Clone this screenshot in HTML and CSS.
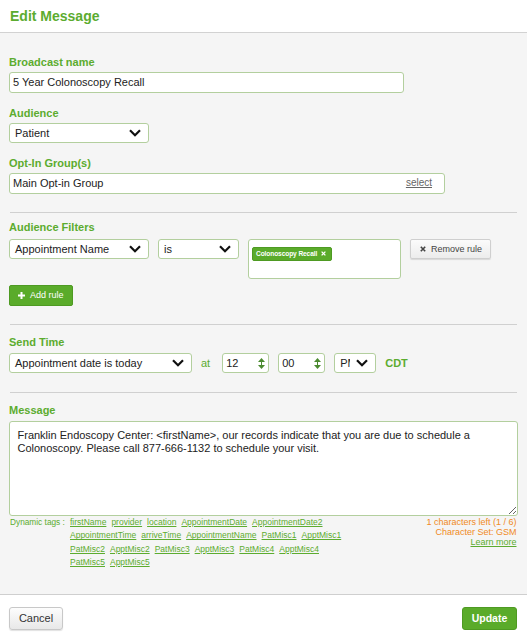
FILE: index.html
```html
<!DOCTYPE html>
<html>
<head>
<meta charset="utf-8">
<link rel="stylesheet" href="styles.css">
</head>
<body>
<div class="header">Edit Message</div>
<div class="main">
  <div class="label">Broadcast name</div>
  <div class="input w-broadcast"><span>5 Year Colonoscopy Recall</span></div>

  <div class="label gap-top">Audience</div>
  <div class="select w-aud"><span class="sel-text">Patient</span><svg class="chev" width="12" height="8" viewBox="0 0 12 8"><path d="M1 1.3 L6 6.3 L11 1.3" fill="none" stroke="#111" stroke-width="2.2"/></svg></div>

  <div class="label gap-top">Opt-In Group(s)</div>
  <div class="input w-opt"><span>Main Opt-in Group</span><span class="select-link">select</span></div>

  <div class="divider d-first"></div>

  <div class="label filters-label">Audience Filters</div>
  <div class="filter-row">
    <div class="select w-f1"><span class="sel-text">Appointment Name</span><svg class="chev" width="12" height="8" viewBox="0 0 12 8"><path d="M1 1.3 L6 6.3 L11 1.3" fill="none" stroke="#111" stroke-width="2.2"/></svg></div>
    <div class="select w-f2"><span class="sel-text">is</span><svg class="chev" width="12" height="8" viewBox="0 0 12 8"><path d="M1 1.3 L6 6.3 L11 1.3" fill="none" stroke="#111" stroke-width="2.2"/></svg></div>
    <div class="tagbox">
      <span class="tag">Colonoscopy Recall<svg class="tag-x" width="5" height="5" viewBox="0 0 5 5"><path d="M0.6 0.6 L4.4 4.4 M4.4 0.6 L0.6 4.4" stroke="#fff" stroke-width="1.3"/></svg></span>
    </div>
    <div class="btn-remove"><svg class="rm-x" width="6" height="6" viewBox="0 0 6 6"><path d="M0.8 0.8 L5.2 5.2 M5.2 0.8 L0.8 5.2" stroke="#444" stroke-width="1.6"/></svg>Remove rule</div>
  </div>
  <div class="btn-add"><svg class="plus" width="7" height="7" viewBox="0 0 7 7"><path d="M2.5 0 H4.5 V2.5 H7 V4.5 H4.5 V7 H2.5 V4.5 H0 V2.5 H2.5 Z" fill="#fff"/></svg>Add rule</div>

  <div class="divider d-mid"></div>

  <div class="label section-label">Send Time</div>
  <div class="send-row">
    <div class="select w-send"><span class="sel-text">Appointment date is today</span><svg class="chev" width="12" height="8" viewBox="0 0 12 8"><path d="M1 1.3 L6 6.3 L11 1.3" fill="none" stroke="#111" stroke-width="2.2"/></svg></div>
    <span class="at">at</span>
    <div class="num"><span>12</span><svg class="spin" width="7" height="11" viewBox="0 0 7 11"><path d="M3.5 0 L7 4 H0 Z M3.5 11 L7 7 H0 Z" fill="#4b8a30"/><rect x="3" y="3.5" width="1" height="4" fill="#4b8a30"/></svg></div>
    <div class="num"><span>00</span><svg class="spin" width="7" height="11" viewBox="0 0 7 11"><path d="M3.5 0 L7 4 H0 Z M3.5 11 L7 7 H0 Z" fill="#4b8a30"/><rect x="3" y="3.5" width="1" height="4" fill="#4b8a30"/></svg></div>
    <div class="select w-pm"><span class="sel-text pm-text">PM</span><svg class="chev" width="12" height="8" viewBox="0 0 12 8"><path d="M1 1.3 L6 6.3 L11 1.3" fill="none" stroke="#111" stroke-width="2.2"/></svg></div>
    <span class="cdt">CDT</span>
  </div>

  <div class="divider d-last"></div>

  <div class="label section-label">Message</div>
  <textarea class="msg">Franklin Endoscopy Center: &lt;firstName&gt;, our records indicate that you are due to schedule a Colonoscopy. Please call 877-666-1132 to schedule your visit.</textarea>

  <div class="tags-row">
    <div class="tags-label">Dynamic tags :</div>
    <div class="tags">
      <div class="tag-line"><span class="lnk">firstName</span><span class="lnk">provider</span><span class="lnk">location</span><span class="lnk">AppointmentDate</span><span class="lnk">AppointmentDate2</span></div>
      <div class="tag-line"><span class="lnk">AppointmentTime</span><span class="lnk">arriveTime</span><span class="lnk">AppointmentName</span><span class="lnk">PatMisc1</span><span class="lnk">ApptMisc1</span></div>
      <div class="tag-line"><span class="lnk">PatMisc2</span><span class="lnk">ApptMisc2</span><span class="lnk">PatMisc3</span><span class="lnk">ApptMisc3</span><span class="lnk">PatMisc4</span><span class="lnk">ApptMisc4</span></div>
      <div class="tag-line"><span class="lnk">PatMisc5</span><span class="lnk">ApptMisc5</span></div>
    </div>
    <div class="counter">
      <div class="orange">1 characters left (1 / 6)</div>
      <div class="orange">Character Set: GSM</div>
      <div class="learn">Learn more</div>
    </div>
  </div>
</div>
<div class="footer">
  <div class="btn-cancel">Cancel</div>
  <div class="btn-update">Update</div>
</div>
</body>
</html>
```

FILE: styles.css
```css
* { box-sizing: border-box; }
body {
  margin: 0;
  font-family: "Liberation Sans", Arial, sans-serif;
  background: #fff;
  color: #222;
}
.header {
  height: 33px;
  line-height: 32px;
  padding-left: 10px;
  border-bottom: 1px solid #d2d2d2;
  font-size: 14px;
  font-weight: bold;
  color: #5cac2f;
}
.main {
  background: #f5f5f5;
  padding: 23px 9px 25px 9px;
}
.label {
  font-size: 11px;
  font-weight: bold;
  line-height: 13px;
  color: #5cac2f;
  margin-bottom: 3px;
}
.gap-top { margin-top: 14px; }
.filters-label { margin-top: 8px; margin-bottom: 5px; }
.section-label { margin-top: 11px; margin-bottom: 4px; }

.input {
  height: 21px;
  border: 1px solid #b3cf9e;
  border-radius: 3px;
  background: #fff;
  font-size: 11px;
  line-height: 19px;
  padding: 0 12px 0 3px;
  display: flex;
  justify-content: space-between;
  color: #222;
}
.w-broadcast { width: 395px; }
.w-opt { width: 436px; }
.select-link {
  font-size: 10px;
  color: #666;
  text-decoration: underline;
  line-height: 17px;
}
.select {
  height: 20px;
  border: 1px solid #b3cf9e;
  border-radius: 3px;
  background: #fff;
  font-size: 11px;
  line-height: 18px;
  padding: 0 7px 0 5px;
  display: flex;
  align-items: center;
  justify-content: space-between;
  color: #222;
}
.chev { flex: none; }
.w-aud { width: 140px; }
.w-f1 { width: 140px; }
.w-f2 { width: 81px; }
.w-send { width: 183px; }
.w-pm { width: 42px; }
.pm-text { width: 10px; overflow: hidden; white-space: nowrap; }

.divider {
  height: 1px;
  background: #d0d0d0;
  margin: 18px 1.5px 0 1px;
}
.d-last { margin-top: 19px; }

.filter-row {
  display: flex;
  align-items: flex-start;
  gap: 9px;
}
.tagbox {
  width: 153px;
  height: 40px;
  border: 1px solid #b3cf9e;
  border-radius: 3px;
  background: #fff;
  padding: 2px 0 0 3px;
}
.tag {
  display: inline-flex;
  align-items: center;
  height: 14px;
  padding: 0 5px 0 3px;
  background: #5aab2a;
  border: 1px solid #4e9a22;
  border-radius: 2px;
  color: #fff;
  font-size: 6.6px;
  font-weight: bold;
  letter-spacing: -0.1px;
}
.tag-x { margin-left: 4px; }
.btn-remove {
  width: 81px;
  height: 20px;
  border: 1px solid #cfcfcf;
  border-radius: 2px;
  background: linear-gradient(#fbfbfb, #ececec);
  box-shadow: 0 1px 1px rgba(0,0,0,0.12);
  font-size: 9px;
  line-height: 18px;
  color: #444;
  display: flex;
  align-items: center;
  padding-left: 9px;
}
.rm-x { margin-right: 5px; }
.btn-add {
  margin-top: 6px;
  width: 64px;
  height: 21px;
  border: 1px solid #4e9a22;
  border-radius: 2px;
  background: #5aab2a;
  color: #fff;
  font-size: 9px;
  line-height: 19px;
  display: flex;
  align-items: center;
  padding-left: 8px;
}
.plus { margin-right: 5px; }

.send-row {
  display: flex;
  align-items: center;
}
.at {
  font-size: 11px;
  color: #5cac2f;
  margin-left: 9px;
  margin-right: 12px;
}
.num {
  width: 47px;
  height: 20px;
  border: 1px solid #b3cf9e;
  border-radius: 3px;
  background: #fff;
  font-size: 11px;
  padding: 0 3px 0 3px;
  display: flex;
  align-items: center;
  justify-content: space-between;
  margin-right: 9px;
}
.cdt {
  font-size: 11px;
  font-weight: bold;
  color: #5cac2f;
  margin-left: 9px;
}

.msg {
  display: block;
  width: 509px;
  height: 95px;
  margin: 0;
  border: 1px solid #b3cf9e;
  border-radius: 3px;
  background: #fff;
  font-family: "Liberation Sans", Arial, sans-serif;
  font-size: 11px;
  line-height: 12.5px;
  color: #222;
  padding: 7px 20px 0 7.5px;
  outline: none;
}

.tags-row {
  display: flex;
  align-items: flex-start;
}
.tags-label {
  width: 61px;
  font-size: 8.3px;
  line-height: 13.3px;
  color: #5cac2f;
  padding-left: 1px;
}
.tags {
  font-size: 8.5px;
  line-height: 13.3px;
}
.tag-line {
  display: flex;
  gap: 5px;
}
.lnk {
  color: #5cac2f;
  text-decoration: underline;
}
.counter {
  margin-left: auto;
  margin-right: 1.5px;
  text-align: right;
  font-size: 9px;
  line-height: 10.3px;
  padding-top: 0.5px;
}
.orange { color: #f08a24; }
.learn { color: #5cac2f; text-decoration: underline; }

.footer {
  border-top: 1px solid #cfcfcf;
  background: #fff;
  padding: 12px 10px 11px 9px;
  display: flex;
  justify-content: space-between;
}
.btn-cancel {
  width: 54px;
  height: 23px;
  border: 1px solid #c8c8c8;
  border-radius: 3px;
  background: linear-gradient(#fdfdfd, #e8e8e8);
  box-shadow: 0 1px 1px rgba(0,0,0,0.12);
  font-size: 11px;
  line-height: 21px;
  text-align: center;
  color: #333;
}
.btn-update {
  width: 55px;
  height: 23px;
  border: 1px solid #4e9a22;
  border-radius: 3px;
  background: #5aab2a;
  font-size: 10.5px;
  font-weight: bold;
  line-height: 21px;
  text-align: center;
  color: #fff;
}
```
